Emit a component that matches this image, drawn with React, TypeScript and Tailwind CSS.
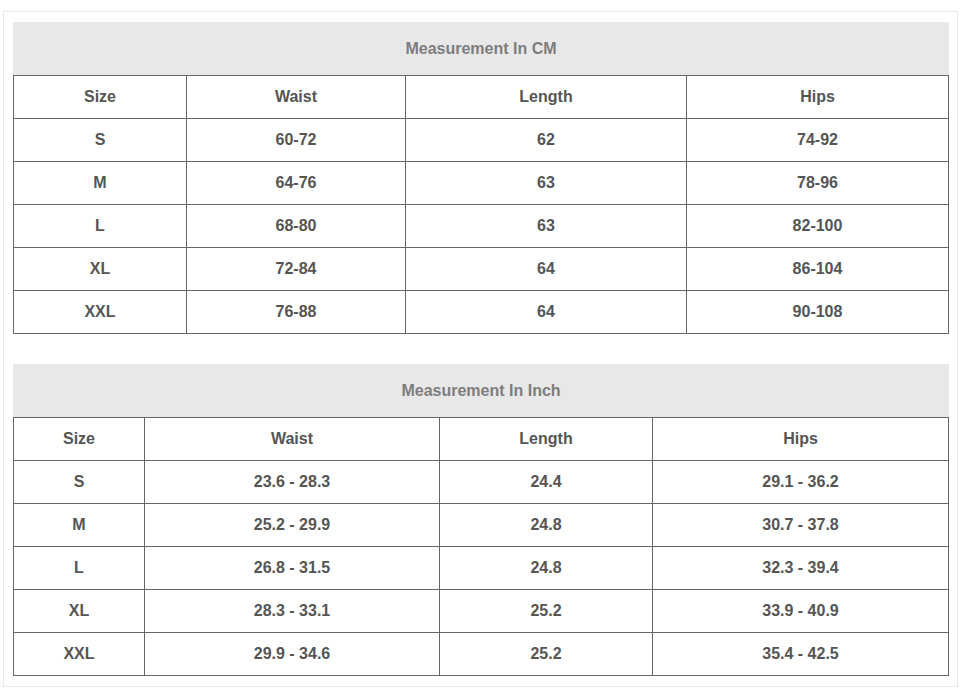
const cm = {
  title: "Measurement In CM",
  cols: ["w-[173px]", "w-[219px]", "w-[281px]", "w-[262px]"],
  rows: [
    ["Size", "Waist", "Length", "Hips"],
    ["S", "60-72", "62", "74-92"],
    ["M", "64-76", "63", "78-96"],
    ["L", "68-80", "63", "82-100"],
    ["XL", "72-84", "64", "86-104"],
    ["XXL", "76-88", "64", "90-108"],
  ],
};

const inch = {
  title: "Measurement In Inch",
  cols: ["w-[131px]", "w-[295px]", "w-[213px]", "w-[296px]"],
  rows: [
    ["Size", "Waist", "Length", "Hips"],
    ["S", "23.6 - 28.3", "24.4", "29.1 - 36.2"],
    ["M", "25.2 - 29.9", "24.8", "30.7 - 37.8"],
    ["L", "26.8 - 31.5", "24.8", "32.3 - 39.4"],
    ["XL", "28.3 - 33.1", "25.2", "33.9 - 40.9"],
    ["XXL", "29.9 - 34.6", "25.2", "35.4 - 42.5"],
  ],
};

type Chart = typeof cm;

function SizeTable({ chart }: { chart: Chart }) {
  return (
    <div className="w-[936px]">
      <div className="flex h-[53px] items-center justify-center bg-[#e8e8e8] text-[16px] font-bold text-[#7d7d7d]">
        {chart.title}
      </div>
      <div className="border-l border-t border-[#666666]">
        {chart.rows.map((row, r) => (
          <div key={r} className="flex">
            {row.map((cell, c) => (
              <div
                key={c}
                className={`${chart.cols[c]} flex h-[43px] items-center justify-center border-b border-r border-[#666666] text-[16px] font-bold text-[#555555]`}
              >
                {cell}
              </div>
            ))}
          </div>
        ))}
      </div>
    </div>
  );
}

export default function App() {
  return (
    <div className="min-h-[694px] bg-white pl-[3px] pt-[11px] font-['Liberation_Sans',Arial,sans-serif]">
      <div className="flex w-[955px] flex-col gap-[30px] border border-[#e8e8e8] pb-[10px] pl-[9px] pt-[10px]">
        <SizeTable chart={cm} />
        <SizeTable chart={inch} />
      </div>
    </div>
  );
}
